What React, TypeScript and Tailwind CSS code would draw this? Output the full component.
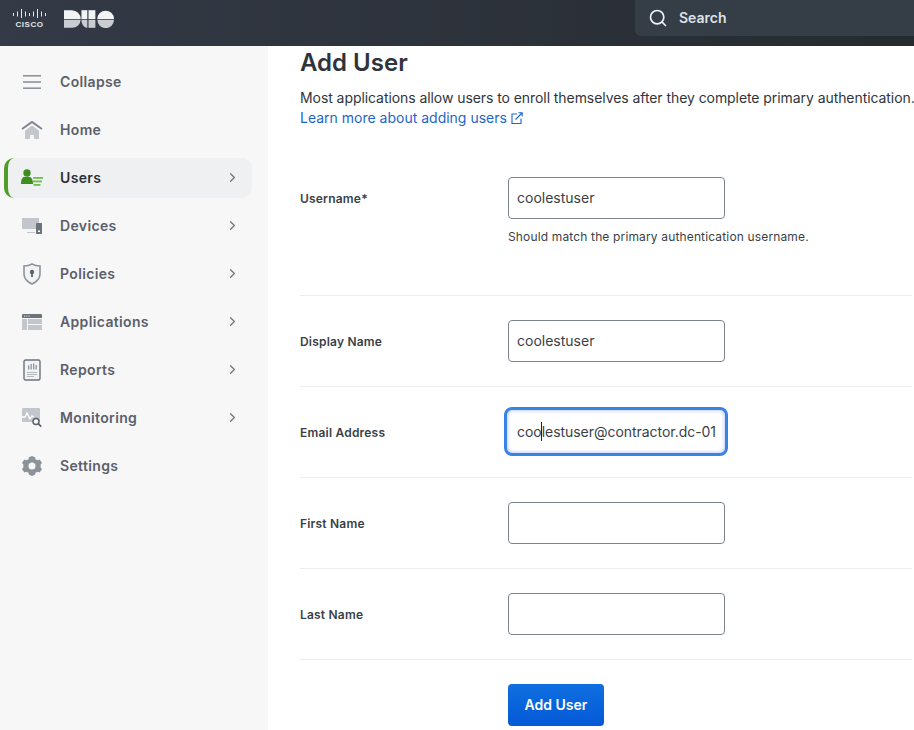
import { ChevronRight, Search } from "lucide-react";

const font = { sans: "font-['Inter',sans-serif]" };

function CollapseIcon() {
  return (
    <svg width="20" height="16" viewBox="0 0 20 16" fill="#8e9399">
      <rect x="1" y="1" width="18" height="1.6" />
      <rect x="1" y="7.2" width="18" height="1.6" />
      <rect x="1" y="13.4" width="18" height="1.6" />
    </svg>
  );
}

function HomeIcon() {
  return (
    <svg width="22" height="20" viewBox="0 0 22 20">
      <path d="M1 9 11 2l10 7" fill="none" stroke="#80868f" strokeWidth="2" />
      <path d="M4 10.5 11 5.5l7 5V19h-5v-4H9v4H4z" fill="#c3c7cc" />
    </svg>
  );
}

function UsersIcon() {
  return (
    <svg width="22" height="18" viewBox="0 0 22 18">
      <circle cx="6" cy="4" r="3.700" fill="#3c8f1f" />
      <path d="M0 15c0-3 .5-6.500 3-7h6c2 .5 3 4 3 7z" fill="#3c8f1f" />
      <rect x="12" y="8" width="10" height="1.800" fill="#6cc04a" />
      <rect x="12" y="11.500" width="9" height="1.800" fill="#6cc04a" />
      <rect x="12.500" y="15" width="7" height="1.800" fill="#6cc04a" />
    </svg>
  );
}

function DevicesIcon() {
  return (
    <svg width="20" height="16" viewBox="0 0 20 16">
      <path d="M0 0h17v11H0z" fill="#c3c7cc" />
      <path d="M5 14h8v1H5z" fill="#c3c7cc" />
      <rect x="14" y="5" width="6" height="11" rx="0.500" fill="#6d737b" />
      <rect x="16" y="12.500" width="2" height="1.500" fill="#fff" />
    </svg>
  );
}

function PoliciesIcon() {
  return (
    <svg width="18" height="22" viewBox="0 0 18 22">
      <path d="M9 1c2.500 1.500 5 2 8 2v8c0 5-3.500 8-8 10-4.500-2-8-5-8-10V3c3 0 5.500-.5 8-2z" fill="#f2f3f4" stroke="#8e9399" strokeWidth="1.600" />
      <circle cx="9" cy="9" r="2.200" fill="#5d636b" />
      <rect x="8.100" y="10" width="1.800" height="4" fill="#5d636b" />
    </svg>
  );
}

function ApplicationsIcon() {
  return (
    <svg width="20" height="16" viewBox="0 0 20 16">
      <path d="M0 1a1 1 0 0 1 1-1h18a1 1 0 0 1 1 1v3H0z" fill="#6d737b" />
      <circle cx="2.500" cy="2" r="0.600" fill="#fff" />
      <circle cx="4.800" cy="2" r="0.600" fill="#fff" />
      <circle cx="7.100" cy="2" r="0.600" fill="#fff" />
      <rect y="5" width="5" height="11" fill="#c3c7cc" />
      <rect x="6" y="5" width="14" height="5" fill="#c3c7cc" />
      <rect x="6" y="11" width="14" height="5" fill="#c3c7cc" />
    </svg>
  );
}

function ReportsIcon() {
  return (
    <svg width="18" height="22" viewBox="0 0 18 22">
      <rect x="1" y="1" width="16" height="20" rx="1.500" fill="#f2f3f4" stroke="#6d737b" strokeWidth="1.400" />
      <path d="M5 6.500h1.300v4H5zM7.500 5h1.300v5.500H7.500zM10 4.500h1.300v6H10zM12.500 6h1.300v4.500h-1.300z" fill="#8e9399" />
      <path d="M4 13h10v1H4zM4 15h10v1H4zM4 17h7v1H4z" fill="#b3b7bc" />
    </svg>
  );
}

function MonitoringIcon() {
  return (
    <svg width="20" height="20" viewBox="0 0 20 20">
      <rect y="0" width="18" height="14" rx="1" fill="#c3c7cc" />
      <path d="M0 9h3l2-4 3 6 2-3 1.500 1" fill="none" stroke="#fff" strokeWidth="1.300" />
      <circle cx="14" cy="13.500" r="3" fill="#f7f7f8" stroke="#5d636b" strokeWidth="1.500" />
      <path d="m16.200 15.700 3 3" stroke="#5d636b" strokeWidth="1.800" />
    </svg>
  );
}

function SettingsIcon() {
  return (
    <svg width="20" height="22" viewBox="0 0 20 22">
      <path d="M10 1l3 1.200.5 2 2.200 1 2-.6L20 8l-1.400 1.500v3L20 14l-2.300 3.400-2-.6-2.200 1-.5 2L10 21l-3-1.200-.5-2-2.200-1-2 .6L0 14l1.400-1.500v-3L0 8l2.300-3.400 2 .6 2.200-1 .5-2z" fill="#8e9399" />
      <circle cx="10" cy="11" r="3.500" fill="#f7f7f8" />
    </svg>
  );
}

function LinkOutIcon() {
  return (
    <svg width="12" height="12" viewBox="0 0 12 12" fill="none" stroke="#1d66c9" strokeWidth="1.100">
      <path d="M6 2H1v9.500h9V6.500" />
      <path d="M4.500 7.500 11 1M7.500 .8H11.200V4.500" />
    </svg>
  );
}

function CiscoLogo() {
  return (
    <div className="flex flex-col items-center gap-[1px]">
      <svg width="33" height="10" viewBox="0 0 33 10" fill="#e4e6e9">
        <rect x="0" y="4" width="1" height="3" />
        <rect x="4" y="2.500" width="1" height="5" />
        <rect x="8" y="0" width="1" height="9" />
        <rect x="12" y="2.500" width="1" height="5" />
        <rect x="16" y="4" width="1" height="3" />
        <rect x="20" y="2.500" width="1" height="5" />
        <rect x="24" y="0" width="1" height="9" />
        <rect x="28" y="2.500" width="1" height="5" />
        <rect x="32" y="4" width="1" height="3" />
      </svg>
      <span className="font-['Liberation_Sans',sans-serif] text-[8px] leading-[9px] font-bold tracking-[0.5px] text-[#e4e6e9]">CISCO</span>
    </div>
  );
}

function DuoLogo() {
  return (
    <svg width="50" height="18" viewBox="0 0 51 18">
      <path d="M0 0h8a9 9 0 0 1 9 9H0z" fill="#f2f3f4" />
      <path d="M0 9.800h17A8.500 8.500 0 0 1 8.500 18H0z" fill="#c9ccd1" />
      <path d="M17.800 0h6v9h-6z" fill="#f2f3f4" />
      <path d="M17.800 9.800h6V18c-3 0-6-3-6-8.200z" fill="#c9ccd1" />
      <path d="M25 0h7v9h-7z" fill="#f2f3f4" />
      <path d="M25 9.800h7V18h-7z" fill="#c9ccd1" />
      <path d="M34 9a8.500 8.500 0 0 1 17 0z" fill="#f2f3f4" />
      <path d="M34 9.800h17a8.500 8.500 0 0 1-17 0z" fill="#c9ccd1" />
    </svg>
  );
}

const navItems = [
  { label: "Collapse", icon: <CollapseIcon /> },
  { label: "Home", icon: <HomeIcon /> },
  { label: "Users", icon: <UsersIcon />, arrow: true, active: true },
  { label: "Devices", icon: <DevicesIcon />, arrow: true },
  { label: "Policies", icon: <PoliciesIcon />, arrow: true },
  { label: "Applications", icon: <ApplicationsIcon />, arrow: true },
  { label: "Reports", icon: <ReportsIcon />, arrow: true },
  { label: "Monitoring", icon: <MonitoringIcon />, arrow: true },
  { label: "Settings", icon: <SettingsIcon /> },
];

function Field({ label, value, hint }: { label: string; value?: string; hint?: string }) {
  return (
    <div className={"flex items-start border-b border-[#eceef0] pt-[24px] " + (hint ? "h-[143px]" : "h-[91px]")}>
      <label className="w-[208px] pt-[14px] text-[12px] leading-[16px] font-semibold tracking-[0.2px] text-[#3a3f47]">{label}</label>
      <div>
        <input
          readOnly
          value={value ?? ""}
          className="block h-[42px] w-[217px] rounded-[4px] border border-[#7d838b] bg-white px-2 pb-[1px] text-[14px] text-[#3a3f47] outline-none"
        />
        {hint && <p className="mt-[11px] text-[12px] leading-[14px] tracking-[0.15px] text-[#3a3f47]">{hint}</p>}
      </div>
    </div>
  );
}

export default function App() {
  return (
    <div className={"flex h-[730px] w-[914px] flex-col overflow-hidden bg-white " + font.sans}>
      <header className="flex h-[46px] shrink-0 items-start bg-gradient-to-r from-[#343a46] to-[#262b31]">
        <div className="flex h-[36px] w-[635px] items-center gap-[18px] pl-[13px] pt-[2px]">
          <CiscoLogo />
          <DuoLogo />
        </div>
        <div className="flex h-[36px] flex-1 items-center gap-[11px] rounded-bl-[6px] bg-[#353d46] pb-[1px] pl-[13px]">
          <Search size={20} strokeWidth={2} className="text-[#eef0f2]" />
          <span className="text-[14px] font-semibold text-[#dfe2e6]">Search</span>
        </div>
      </header>

      <div className="flex min-h-0 flex-1">
        <nav className="flex w-[268px] shrink-0 flex-col gap-2 bg-[#f7f7f8] pl-1 pr-4 pt-4">
          {navItems.map((item) => (
            <div
              key={item.label}
              className={
                "flex h-10 items-center rounded-[10px] pb-[1px] pr-3 " +
                (item.active ? "border-l-4 border-[#4f9d27] bg-[#eff0f2] pl-[13px]" : "pl-[17px]")
              }
            >
              <span className="flex w-[22px] justify-center">{item.icon}</span>
              <span
                className={
                  "ml-[17px] flex-1 text-[14px] font-semibold tracking-[0.35px] " +
                  (item.active ? "text-[#2b3038]" : "text-[#5b606b]")
                }
              >
                {item.label}
              </span>
              {item.arrow && <ChevronRight size={15} strokeWidth={2} className="text-[#70757d]" />}
            </div>
          ))}
        </nav>

        <main className="min-w-0 flex-1 pl-8 pr-[2px]">
          <h1 className="mt-[2px] text-[24px] leading-[30px] font-semibold text-[#2f343c]">Add User</h1>
          <p className="mt-[10px] whitespace-nowrap text-[14px] leading-[20px] tracking-[-0.07px] text-[#30353c]">
            Most applications allow users to enroll themselves after they complete primary authentication.
          </p>
          <a className="flex items-center gap-[4px] text-[14px] leading-[20px] text-[#1d66c9]">
            Learn more about adding users <LinkOutIcon />
          </a>

          <div className="mt-[25px]">
            <Field label="Username*" value="coolestuser" hint="Should match the primary authentication username." />
            <Field label="Display Name" value="coolestuser" />
            <div className="flex h-[91px] items-start border-b border-[#eceef0] pt-[20px]">
              <label className="w-[204px] pt-[18px] text-[12px] leading-[16px] font-semibold tracking-[0.2px] text-[#3a3f47]">Email Address</label>
              <div className="flex h-[49px] w-[224px] items-center rounded-[8px] border-[3px] border-[#3b82e6] bg-white px-[10px] text-[14px] tracking-[-0.04px] whitespace-nowrap text-[#3a3f47] shadow-[inset_0_0_4px_#9dbcec]">
                <span>coo</span>
                <span className="mx-[-0.5px] inline-block h-[19px] w-px shrink-0 bg-[#20242a]" />
                <span>lestuser@contractor.dc-01</span>
              </div>
            </div>
            <Field label="First Name" />
            <Field label="Last Name" />
            <div className="pt-[24px] pl-[208px]">
              <button className="h-[42px] w-[96px] rounded-[4px] bg-gradient-to-b from-[#0f6fe0] to-[#0559d6] pb-[1px] text-[14px] font-semibold text-white">
                Add User
              </button>
            </div>
          </div>
        </main>
      </div>
    </div>
  );
}
